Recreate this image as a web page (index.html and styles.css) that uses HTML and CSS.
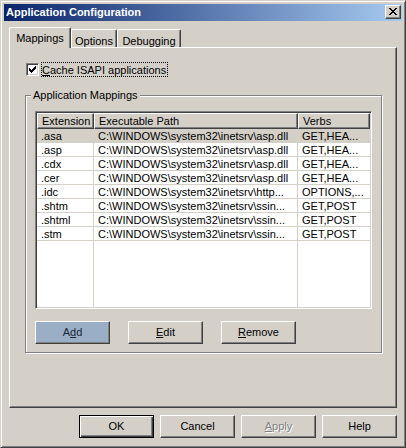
FILE: index.html
```html
<!DOCTYPE html>
<html>
<head>
<meta charset="utf-8">
<title>Application Configuration</title>
<link rel="stylesheet" href="styles.css">
</head>
<body>
<div class="window">
  <div class="titlebar">
    <span class="title">Application Configuration</span>
    <button class="close" type="button" aria-label="Close">
      <svg width="8" height="7" viewBox="0 0 8 7" shape-rendering="crispEdges"><path d="M0 0h2v1H0zM6 0h2v1H6zM1 1h2v1H1zM5 1h2v1H5zM2 2h4v1H2zM3 3h2v1H3zM2 4h4v1H2zM1 5h2v1H1zM5 5h2v1H5zM0 6h2v1H0zM6 6h2v1H6z" fill="#000"/></svg>
    </button>
  </div>
  <div class="client">
    <div class="tabs">
      <div class="tab active">Mappings</div>
      <div class="tab">Options</div>
      <div class="tab">Debugging</div>
    </div>
    <div class="panel">
      <div class="check-row">
        <span class="checkbox">
          <svg width="7" height="7" viewBox="0 0 7 7" shape-rendering="crispEdges"><path d="M6 0h1v1H6zM5 1h2v1H5zM0 2h1v1H0zM4 2h3v1H4zM0 3h2v1H0zM3 3h3v1H3zM0 4h5v1H0zM1 5h3v1H1zM2 6h1v1H2z" fill="#000"/></svg>
        </span>
        <span class="focus"><u>C</u>ache ISAPI applications</span>
      </div>
      <fieldset class="group">
        <legend>Application Mappings</legend>
        <div class="list">
          <div class="header">
            <div class="hcell c1">Extension</div>
            <div class="hcell c2">Executable Path</div>
            <div class="hcell c3">Verbs</div>
          </div>
          <div class="rows">
            <div class="row sel"><div class="cell c1">.asa</div><div class="cell c2">C:\WINDOWS\system32\inetsrv\asp.dll</div><div class="cell c3">GET,HEA...</div></div>
            <div class="row"><div class="cell c1">.asp</div><div class="cell c2">C:\WINDOWS\system32\inetsrv\asp.dll</div><div class="cell c3">GET,HEA...</div></div>
            <div class="row"><div class="cell c1">.cdx</div><div class="cell c2">C:\WINDOWS\system32\inetsrv\asp.dll</div><div class="cell c3">GET,HEA...</div></div>
            <div class="row"><div class="cell c1">.cer</div><div class="cell c2">C:\WINDOWS\system32\inetsrv\asp.dll</div><div class="cell c3">GET,HEA...</div></div>
            <div class="row"><div class="cell c1">.idc</div><div class="cell c2">C:\WINDOWS\system32\inetsrv\http...</div><div class="cell c3">OPTIONS,...</div></div>
            <div class="row"><div class="cell c1">.shtm</div><div class="cell c2">C:\WINDOWS\system32\inetsrv\ssin...</div><div class="cell c3">GET,POST</div></div>
            <div class="row"><div class="cell c1">.shtml</div><div class="cell c2">C:\WINDOWS\system32\inetsrv\ssin...</div><div class="cell c3">GET,POST</div></div>
            <div class="row"><div class="cell c1">.stm</div><div class="cell c2">C:\WINDOWS\system32\inetsrv\ssin...</div><div class="cell c3">GET,POST</div></div>
          </div>
        </div>
        <div class="btn-row">
          <button class="btn hot" type="button">A<u>d</u>d</button>
          <button class="btn" type="button"><u>E</u>dit</button>
          <button class="btn" type="button"><u>R</u>emove</button>
        </div>
      </fieldset>
    </div>
    <div class="footer">
      <button class="btn default" type="button">OK</button>
      <button class="btn" type="button">Cancel</button>
      <button class="btn disabled" type="button"><u>A</u>pply</button>
      <button class="btn" type="button">Help</button>
    </div>
  </div>
</div>
</body>
</html>
```
FILE: styles.css
```css
* { box-sizing: border-box; }
html, body { margin: 0; padding: 0; }
body {
  width: 406px;
  height: 448px;
  overflow: hidden;
  background: #d4d0c8;
  color: #000;
  font-family: "Liberation Sans", Arial, sans-serif;
  font-size: 11px;
  line-height: 13px;
}
.window {
  width: 406px;
  height: 448px;
  background: #d4d0c8;
  border: 1px solid;
  border-color: #d4d0c8 #404040 #404040 #d4d0c8;
  box-shadow: inset 1px 1px #fff, inset -1px -1px #808080;
  padding: 3px;
  display: flex;
  flex-direction: column;
}
.titlebar {
  height: 17px;
  flex: none;
  display: flex;
  align-items: flex-start;
  justify-content: space-between;
  padding: 0 1px 0 2px;
  background: linear-gradient(to right, #0a246a, #a6caf0);
}
.title {
  color: #fff;
  font-weight: bold;
  line-height: 17px;
}
.close {
  margin-top: 1px;
  width: 16px;
  height: 14px;
  padding: 0 0 1px 0;
  display: flex;
  align-items: center;
  justify-content: center;
  background: #d4d0c8;
  border: 1px solid;
  border-color: #fff #404040 #404040 #fff;
  box-shadow: inset -1px -1px #808080;
}
.client {
  flex: 1;
  padding: 6px 5px 0 5px;
  display: flex;
  flex-direction: column;
}
.tabs {
  display: flex;
  align-items: flex-end;
  height: 20px;
  flex: none;
  position: relative;
  z-index: 1;
}
.tab {
  height: 18px;
  padding-top: 5px;
  text-align: center;
  background: #d4d0c8;
  border-top: 1px solid #fff;
  border-left: 1px solid #fff;
  border-right: 1px solid #404040;
  box-shadow: inset -1px 0 #808080;
  border-radius: 2px 2px 0 0;
  white-space: nowrap;
}
.tab:nth-child(1) { width: 62px; }
.tab:nth-child(2) { width: 46px; }
.tab:nth-child(3) { width: 64px; }
.tab.active {
  height: 21px;
  margin-bottom: -1px;
  padding-top: 4px;
}
.panel {
  height: 361px;
  flex: none;
  border: 1px solid;
  border-color: #fff #404040 #404040 #fff;
  box-shadow: inset -1px -1px #808080;
  padding: 14px 15px 0 15px;
}
.check-row {
  display: flex;
  align-items: center;
  gap: 2px;
  margin-left: 1px;
}
.checkbox {
  width: 13px;
  height: 13px;
  flex: none;
  background: #fff;
  border: 1px solid;
  border-color: #808080 #fff #fff #808080;
  box-shadow: inset 1px 1px #404040, inset -1px -1px #d4d0c8;
  display: flex;
  padding: 2px 0 0 2px;
}
.focus {
  border: 1px dotted #000;
  padding: 1px 1px 0 0;
  height: 15px;
  line-height: 13px;
  white-space: nowrap;
}
u { text-decoration: underline; text-underline-offset: 1px; }
.group {
  margin: 12px 0 0 0;
  width: 357px;
  min-width: 0;
  padding: 9px 9px 8px 9px;
  border: 1px solid #808080;
  box-shadow: inset 1px 1px #fff, 1px 1px #fff;
}
.group legend {
  margin-left: -4px;
  padding: 0 2px;
  line-height: 13px;
  background: #d4d0c8;
}
.list {
  width: 337px;
  height: 198px;
  background: #fff;
  border: 1px solid;
  border-color: #808080 #fff #fff #808080;
  box-shadow: inset 1px 1px #404040, inset -1px -1px #d4d0c8;
  padding: 1px;
  display: flex;
  flex-direction: column;
}
.header {
  display: flex;
  height: 16px;
  flex: none;
}
.hcell {
  height: 16px;
  padding: 1px 0 0 4px;
  background: #d4d0c8;
  border-top: 1px solid #fff;
  border-left: 1px solid #fff;
  border-right: 1px solid #404040;
  border-bottom: 1px solid #404040;
  box-shadow: inset -1px -1px #808080;
  white-space: nowrap;
  overflow: hidden;
}
.c1 { width: 57px; flex: none; }
.c2 { width: 204px; flex: none; }
.c3 { width: 72px; flex: none; }
.rows {
  flex: 1;
  background:
    linear-gradient(to right, transparent 56px, #d4d0c8 56px, #d4d0c8 57px, transparent 57px),
    linear-gradient(to right, transparent 260px, #d4d0c8 260px, #d4d0c8 261px, transparent 261px),
    #fff;
}
.row {
  display: flex;
  height: 14px;
  border-bottom: 1px solid #d4d0c8;
}
.row.sel { background: #d4d0c8; }
.cell {
  padding: 1px 0 0 4px;
  line-height: 12px;
  white-space: nowrap;
  overflow: hidden;
  border-right: 1px solid #d4d0c8;
}
.cell.c3 { border-right: none; }
.btn-row {
  display: flex;
  gap: 18px;
  margin-top: 12px;
}
.btn {
  width: 75px;
  height: 23px;
  padding: 0;
  font: inherit;
  color: #000;
  background: #d4d0c8;
  border: 1px solid;
  border-color: #fff #404040 #404040 #fff;
  box-shadow: inset -1px -1px #808080;
  text-align: center;
}
.btn.hot {
  background: #9aafc6;
  color: #1c2638;
}
.btn.default {
  border: 1px solid #000;
  box-shadow: inset 1px 1px #fff, inset -1px -1px #404040, inset -2px -2px #808080;
}
.btn.disabled {
  color: #808080;
  text-shadow: 1px 1px #fff;
}
.footer {
  display: flex;
  justify-content: flex-end;
  gap: 6px;
  margin-top: 7px;
}
```
